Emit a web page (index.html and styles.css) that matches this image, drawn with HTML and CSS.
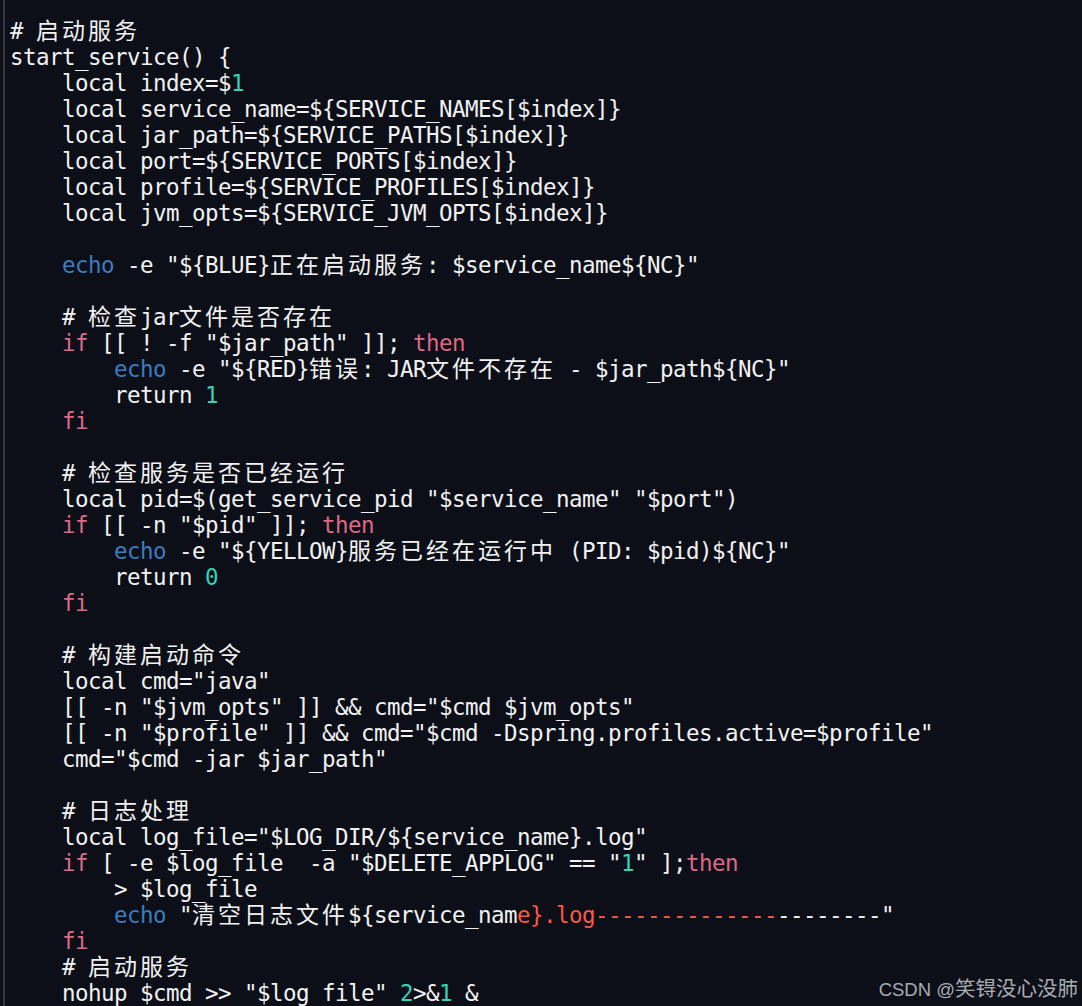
FILE: index.html
```html
<!DOCTYPE html>
<html lang="zh">
<head>
<meta charset="utf-8">
<title>start_service</title>
<link rel="stylesheet" href="styles.css">
</head>
<body>
<div class="frame">
<div class="code">
<div class="l"># <span class="cj">启动服务</span></div>
<div class="l">start_service() {</div>
<div class="l">    local index=$<span class="n">1</span></div>
<div class="l">    local service_name=${SERVICE_NAMES[$index]}</div>
<div class="l">    local jar_path=${SERVICE_PATHS[$index]}</div>
<div class="l">    local port=${SERVICE_PORTS[$index]}</div>
<div class="l">    local profile=${SERVICE_PROFILES[$index]}</div>
<div class="l">    local jvm_opts=${SERVICE_JVM_OPTS[$index]}</div>
<div class="l"></div>
<div class="l">    <span class="b">echo</span> -e "${BLUE}<span class="cj">正在启动服务</span>: $service_name${NC}"</div>
<div class="l"></div>
<div class="l">    # <span class="cj">检查</span>jar<span class="cj">文件是否存在</span></div>
<div class="l">    <span class="k">if</span> [[ ! -f "$jar_path" ]]; <span class="k">then</span></div>
<div class="l">        <span class="b">echo</span> -e "${RED}<span class="cj">错误</span>: JAR<span class="cj">文件不存在</span> - $jar_path${NC}"</div>
<div class="l">        return <span class="n">1</span></div>
<div class="l">    <span class="k">fi</span></div>
<div class="l"></div>
<div class="l">    # <span class="cj">检查服务是否已经运行</span></div>
<div class="l">    local pid=$(get_service_pid "$service_name" "$port")</div>
<div class="l">    <span class="k">if</span> [[ -n "$pid" ]]; <span class="k">then</span></div>
<div class="l">        <span class="b">echo</span> -e "${YELLOW}<span class="cj">服务已经在运行中</span> (PID: $pid)${NC}"</div>
<div class="l">        return <span class="n">0</span></div>
<div class="l">    <span class="k">fi</span></div>
<div class="l"></div>
<div class="l">    # <span class="cj">构建启动命令</span></div>
<div class="l">    local cmd="java"</div>
<div class="l">    [[ -n "$jvm_opts" ]] &amp;&amp; cmd="$cmd $jvm_opts"</div>
<div class="l">    [[ -n "$profile" ]] &amp;&amp; cmd="$cmd -Dspring.profiles.active=$profile"</div>
<div class="l">    cmd="$cmd -jar $jar_path"</div>
<div class="l"></div>
<div class="l">    # <span class="cj">日志处理</span></div>
<div class="l">    local log_file="$LOG_DIR/${service_name}.log"</div>
<div class="l">    <span class="k">if</span> [ -e $log_file  -a "$DELETE_APPLOG" == "<span class="n">1</span>" ];<span class="k">then</span></div>
<div class="l">        &gt; $log_file</div>
<div class="l">        <span class="b">echo</span> "<span class="cj">清空日志文件</span>${service_nam<span class="r">e}.log--------------</span>--------"</div>
<div class="l">    <span class="k">fi</span></div>
<div class="l">    # <span class="cj">启动服务</span></div>
<div class="l">    nohup $cmd &gt;&gt; "$log_file" <span class="n">2</span>&gt;&amp;<span class="n">1</span> &amp;</div>
</div>
<div class="mark">CSDN @<span class="mark-cj">笑锝没心没肺</span></div>
</div>
</body>
</html>
```

FILE: styles.css
```css
html, body {
  margin: 0;
  padding: 0;
  background: #0c0f18;
  height: 100%;
  overflow: hidden;
}

.frame {
  position: relative;
  margin-left: 3px;
  border-left: 2px solid #393a3d;
  height: 100%;
  box-sizing: border-box;
  padding: 18px 0 0 5px;
}

.code {
  display: flex;
  flex-direction: column;
  font-family: "DejaVu Sans Mono", "Noto Sans CJK SC", monospace;
  font-size: 22.5px;
  letter-spacing: -0.546px;
  color: #f2f2f2;
}

.l {
  height: 26px;
  line-height: 26px;
  white-space: pre;
  flex: none;
}

.cj {
  font-family: "Noto Sans CJK SC", sans-serif;
  font-size: 23px;
  letter-spacing: 3px;
  line-height: 0;
}

.k { color: #dc6a86; }
.b { color: #3b7dc0; }
.n { color: #30d6b6; }
.r { color: #ff5745; }

.mark {
  position: absolute;
  right: 4px;
  bottom: 4px;
  font-family: "Liberation Sans", "Noto Sans CJK SC", sans-serif;
  font-size: 18.5px;
  color: #a9abb0;
  white-space: nowrap;
}

.mark-cj {
  font-family: "Noto Sans CJK SC", sans-serif;
  font-size: 20.5px;
}
```
